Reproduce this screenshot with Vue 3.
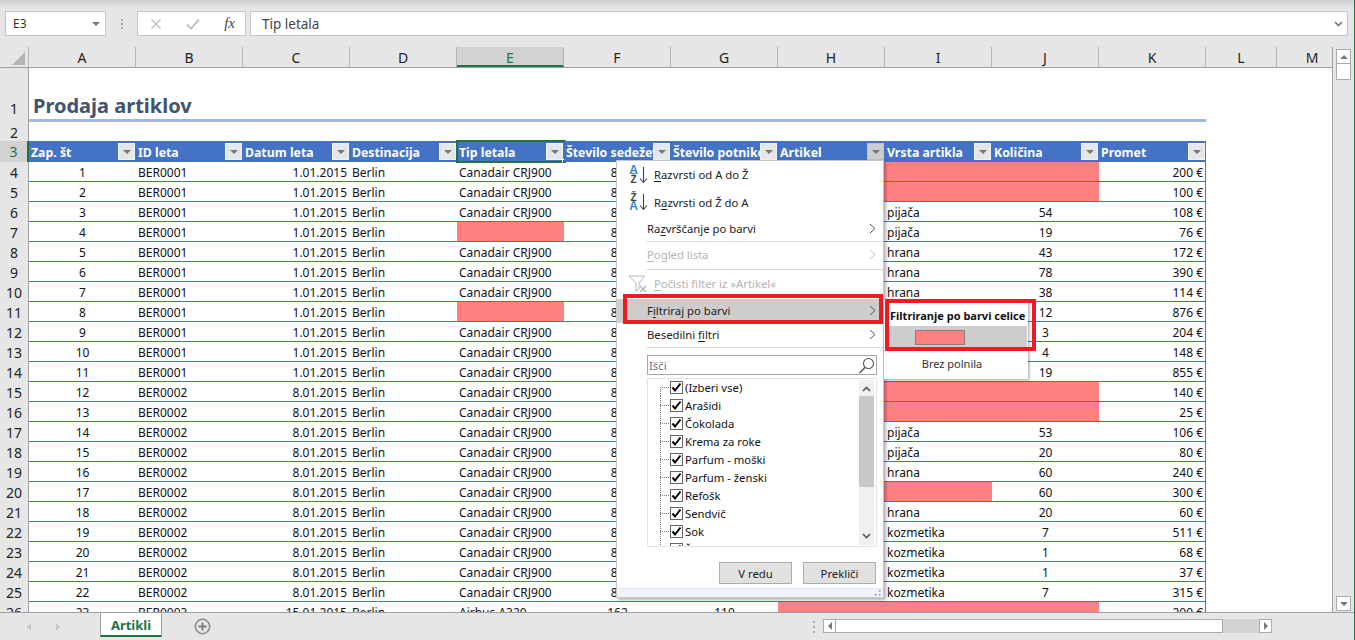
<script setup>
// column letters and widths of the visible sheet
const columns = ['A', 'B', 'C', 'D', 'E', 'F', 'G', 'H', 'I', 'J', 'K', 'L', 'M']
const headers = ['Zap. št', 'ID leta', 'Datum leta', 'Destinacija', 'Tip letala', 'Število sedežev', 'Število potnikov', 'Artikel', 'Vrsta artikla', 'Količina', 'Promet']

// n, tipe pink, vrsta (null = pink), kolicina (null = pink), promet
const raw = [
  [1, false, null, null, 200],
  [2, false, null, null, 100],
  [3, false, 'pijača', 54, 108],
  [4, true, 'pijača', 19, 76],
  [5, false, 'hrana', 43, 172],
  [6, false, 'hrana', 78, 390],
  [7, false, 'hrana', 38, 114],
  [8, true, '', 12, 876],
  [9, false, '', 3, 204],
  [10, false, '', 4, 148],
  [11, false, '', 19, 855],
  [12, false, null, null, 140],
  [13, false, null, null, 25],
  [14, false, 'pijača', 53, 106],
  [15, false, 'pijača', 20, 80],
  [16, false, 'hrana', 60, 240],
  [17, false, null, 60, 300],
  [18, false, 'hrana', 20, 60],
  [19, false, 'kozmetika', 7, 511],
  [20, false, 'kozmetika', 1, 68],
  [21, false, 'kozmetika', 1, 37],
  [22, false, 'kozmetika', 7, 315]
]

const rows = raw.map(([n, tipPink, vrsta, kolicina, promet]) => {
  const second = n > 11
  const pinkVrsta = vrsta === null
  return {
    num: n + 3,
    cells: [
      { text: n, cls: 'center' },
      { text: second ? 'BER0002' : 'BER0001' },
      { text: second ? '8.01.2015' : '1.01.2015', cls: 'right date' },
      { text: 'Berlin' },
      { text: tipPink ? '' : 'Canadair CRJ900', cls: tipPink ? 'pink' : '' },
      { text: 86, cls: 'center' },
      { text: '', cls: 'center' },
      { text: '', cls: pinkVrsta ? 'pink' : '' },
      { text: vrsta || '', cls: pinkVrsta ? 'pink' : '' },
      { text: kolicina ?? '', cls: kolicina ? 'center' : 'pink' },
      { text: promet + ' €', cls: 'right' }
    ]
  }
})

rows.push({
  num: 26,
  cells: [
    { text: 23, cls: 'center' },
    { text: 'BER0003' },
    { text: '15.01.2015', cls: 'right date' },
    { text: 'Berlin' },
    { text: 'Airbus A320' },
    { text: 162, cls: 'center' },
    { text: 110, cls: 'center' },
    { text: '', cls: 'pink' },
    { text: '', cls: 'pink' },
    { text: '', cls: 'pink' },
    { text: '200 €', cls: 'right' }
  ]
})

const filterItems = ['(Izberi vse)', 'Arašidi', 'Čokolada', 'Krema za roke', 'Parfum - moški', 'Parfum - ženski', 'Refošk', 'Sendvič', 'Sok', 'Šunka']
</script>

<template>
  <div class="app">
    <!-- Formula bar -->
    <div class="formula-bar">
      <div class="name-box">
        <span>E3</span>
        <i class="arrow-down"></i>
      </div>
      <div class="grip"><b></b><b></b><b></b></div>
      <div class="fx-box">
        <svg width="12" height="12" viewBox="0 0 12 12"><path d="M1.5 1.5l9 9M10.500 1.500l-9 9" stroke="#c4c4c4" stroke-width="1.6" fill="none" /></svg>
        <svg width="14" height="12" viewBox="0 0 14 12"><path d="M1 6.500l4 4 8-9" stroke="#c4c4c4" stroke-width="2" fill="none" /></svg>
        <span class="fx">fx</span>
      </div>
      <div class="formula-input">
        <span>Tip letala</span>
        <svg width="9" height="6" viewBox="0 0 9 6"><path d="M1 1l3.500 3.500L8 1" stroke="#777" stroke-width="1.6" fill="none" /></svg>
      </div>
    </div>

    <div class="main">
      <div class="grid">
        <!-- Column letters -->
        <div class="col-header">
          <div class="corner"><i></i></div>
          <div
            v-for="c in columns"
            :key="c"
            class="col-letter"
            :class="{ active: c === 'E', 'col-l': c === 'L' || c === 'M' }"
          >{{ c }}</div>
        </div>

        <div class="sheet">
          <div class="row row-title">
            <div class="row-num">1</div>
            <div class="title">Prodaja artiklov</div>
          </div>
          <div class="row row-blank">
            <div class="row-num">2</div>
          </div>
          <div class="row row-head">
            <div class="row-num active">3</div>
            <div v-for="(h, i) in headers" :key="h" class="head-cell">
              <span>{{ h }}</span>
              <div class="filter-btn" :class="{ open: h === 'Artikel' }"><i class="arrow-down"></i></div>
              <div v-if="i === 4" class="selection"><b></b></div>
            </div>
          </div>
          <div v-for="r in rows" :key="r.num" class="row">
            <div class="row-num">{{ r.num }}</div>
            <div v-for="(c, i) in r.cells" :key="i" class="cell" :class="c.cls">{{ c.text }}</div>
          </div>
        </div>
      </div>

      <!-- Vertical scrollbar -->
      <div class="vscroll">
        <div class="vs-btn"><i class="arrow-up"></i></div>
        <div class="vs-thumb"></div>
        <div class="vs-track"></div>
        <div class="vs-btn"><i class="arrow-down"></i></div>
      </div>
    </div>

    <!-- Sheet tabs -->
    <div class="tabs">
      <div class="tab-nav">
        <i class="nav-left"></i>
        <i class="nav-right"></i>
      </div>
      <div class="tab">Artikli</div>
      <svg class="add" width="17" height="17" viewBox="0 0 17 17">
        <circle cx="8.500" cy="8.500" r="7.200" fill="none" stroke="#8a8a8a" stroke-width="1.500" />
        <path d="M8.500 4.500v8M4.500 8.500h8" stroke="#7a7a7a" stroke-width="1.800" />
      </svg>
      <div class="grip tab-grip"><b></b><b></b><b></b></div>
      <div class="hscroll">
        <div class="hs-btn"><i class="nav-left dark"></i></div>
        <div class="hs-thumb"></div>
        <div class="hs-track"></div>
        <div class="hs-btn"><i class="nav-right dark"></i></div>
      </div>
    </div>

    <!-- Filter dropdown -->
    <div class="menu">
      <div class="item sort sort-a">
        <span class="az"><b class="blue">A</b><b>Ž</b></span>
        <svg class="sort-arrow" width="9" height="18" viewBox="0 0 9 18"><path d="M4.500 1v15M1 12.500l3.500 4 3.500-4" stroke="#444" stroke-width="1.100" fill="none" /></svg>
        <span><u>R</u>azvrsti od A do Ž</span>
      </div>
      <div class="item sort sort-z">
        <span class="az"><b>Ž</b><b class="blue">A</b></span>
        <svg class="sort-arrow" width="9" height="18" viewBox="0 0 9 18"><path d="M4.500 1v15M1 12.500l3.500 4 3.500-4" stroke="#444" stroke-width="1.100" fill="none" /></svg>
        <span>R<u>a</u>zvrsti od Ž do A</span>
      </div>
      <div class="item sub h24">
        <span>Ra<u>z</u>vrščanje po barvi</span>
        <svg class="chev" width="7" height="11" viewBox="0 0 7 11"><path d="M1 1l5 4.500-5 4.500" stroke="#555" fill="none" /></svg>
      </div>
      <div class="sep"></div>
      <div class="item sub disabled h27">
        <span><u>P</u>ogled lista</span>
        <svg class="chev" width="7" height="11" viewBox="0 0 7 11"><path d="M1 1l5 4.500-5 4.500" stroke="#bbb" fill="none" /></svg>
      </div>
      <div class="sep"></div>
      <div class="item sort disabled h29">
        <svg class="clear" width="20" height="18" viewBox="0 0 20 18">
          <path d="M1 1h16l-6 7v6l-3 2V8z" fill="#fff" stroke="#b9b9b9" />
          <path d="M12 11l6 6M18 11l-6 6" stroke="#b0b0b0" stroke-width="1.200" />
        </svg>
        <span><u>P</u>očisti filter iz »Artikel«</span>
      </div>
      <div class="item sub hover h24">
        <span>F<u>i</u>ltriraj po barvi</span>
        <svg class="chev" width="7" height="11" viewBox="0 0 7 11"><path d="M1 1l5 4.500-5 4.500" stroke="#555" fill="none" /></svg>
      </div>
      <div class="item sub h24">
        <span>Besedilni <u>f</u>iltri</span>
        <svg class="chev" width="7" height="11" viewBox="0 0 7 11"><path d="M1 1l5 4.500-5 4.500" stroke="#555" fill="none" /></svg>
      </div>
      <div class="sep"></div>

      <div class="search">
        <span>Išči</span>
        <svg width="17" height="17" viewBox="0 0 17 17">
          <circle cx="10.500" cy="6.500" r="5" fill="none" stroke="#555" stroke-width="1.100" />
          <path d="M7 10.500L1.500 16" stroke="#555" stroke-width="1.400" />
        </svg>
      </div>

      <div class="list">
        <div class="list-items">
          <div v-for="item in filterItems" :key="item" class="list-item">
            <span class="tree"></span>
            <span class="check">
              <svg width="11" height="11" viewBox="0 0 11 11"><path d="M1.500 5.500l2.500 3 5.500-7" stroke="#000" stroke-width="2" fill="none" /></svg>
            </span>
            <span>{{ item }}</span>
          </div>
        </div>
        <div class="list-scroll">
          <svg width="9" height="6" viewBox="0 0 9 6"><path d="M1 5l3.500-3.500L8 5" stroke="#555" stroke-width="1.600" fill="none" /></svg>
          <div class="list-thumb"></div>
          <svg width="9" height="6" viewBox="0 0 9 6"><path d="M1 1l3.500 3.500L8 1" stroke="#555" stroke-width="1.600" fill="none" /></svg>
        </div>
      </div>

      <div class="buttons">
        <button class="btn">V redu</button>
        <button class="btn">Prekliči</button>
      </div>

      <div class="gripper">
        <svg width="8" height="8" viewBox="0 0 8 8"><path d="M6 1h1.500v1.500H6zM6 5h1.500v1.500H6zM2 5h1.500v1.500H2z" fill="#888" /></svg>
      </div>
    </div>

    <!-- Colour submenu -->
    <div class="submenu">
      <div class="sub-title">Filtriranje po barvi celice</div>
      <div class="sub-swatch"><i></i></div>
      <div class="sub-none">Brez polnila</div>
    </div>

    <!-- Red callouts from the tutorial -->
    <div class="callout callout-item"></div>
    <div class="callout callout-sub"></div>
  </div>
</template>

<style scoped>
.app {
  position: relative;
  width: 1355px;
  height: 640px;
  overflow: hidden;
  display: flex;
  flex-direction: column;
  background: #e6e6e6;
  border-right: 1px solid #217346;
  box-sizing: border-box;
  font-family: "Noto Sans", sans-serif;
  font-size: 12px;
  color: #111;
}

.formula-bar {
  flex: none;
  height: 47px;
  box-sizing: border-box;
  padding: 11px 6px 11px 5px;
  display: flex;
  background: linear-gradient(to bottom, #cfcfcf 0, #e6e6e6 9px);
}

.name-box,
.fx-box,
.formula-input {
  box-sizing: border-box;
  height: 25px;
  background: #fff;
  border: 1px solid #c6c6c6;
  display: flex;
  align-items: center;
}

.name-box {
  width: 101px;
  padding: 0 5px 0 7px;
  justify-content: space-between;
  color: #333;
}

.grip {
  width: 31px;
  display: flex;
  flex-direction: column;
  align-items: center;
  justify-content: center;
  gap: 2px;
}

.grip b {
  width: 2px;
  height: 2px;
  background: #a8a8a8;
}

.fx-box {
  width: 109px;
  padding: 0 10px 0 12px;
  justify-content: space-between;
}

.fx {
  font-family: "Liberation Serif", serif;
  font-style: italic;
  font-size: 15px;
  color: #444;
}

.formula-input {
  flex: 1;
  margin-left: 4px;
  padding: 0 4px 0 11px;
  justify-content: space-between;
  font-size: 13.500px;
  color: #444;
}

.arrow-down {
  display: block;
  width: 0;
  height: 0;
  border-left: 4px solid transparent;
  border-right: 4px solid transparent;
  border-top: 4px solid #777;
}

.arrow-up {
  display: block;
  width: 0;
  height: 0;
  border-left: 4px solid transparent;
  border-right: 4px solid transparent;
  border-bottom: 4px solid #777;
}

.main {
  flex: none;
  height: 565px;
  display: flex;
}

.grid {
  width: 1333px;
  flex: none;
  display: flex;
  flex-direction: column;
  border-right: 1px solid #a0a0a0;
  box-sizing: border-box;
}

.col-header {
  flex: none;
  height: 21px;
  display: flex;
  overflow: hidden;
  box-sizing: border-box;
  border-bottom: 1px solid #a0a0a0;
}

.corner {
  flex: none;
  width: 29px;
  box-sizing: border-box;
  border-right: 1px solid #b4b4b4;
  padding: 5px 0 0 12px;
}

.corner i {
  display: block;
  width: 13px;
  height: 13px;
  background: #b4b4b4;
  clip-path: polygon(100% 0, 100% 100%, 0 100%);
}

.col-letter {
  flex: none;
  width: 107px;
  box-sizing: border-box;
  border-right: 1px solid #b4b4b4;
  text-align: center;
  font-size: 14px;
  line-height: 21px;
  color: #222;
}

.col-letter.active {
  background: #d2d2d2;
  color: #217346;
  border-bottom: 2px solid #217346;
}

.col-l {
  width: 71px;
}

.sheet {
  flex: 1;
  overflow: hidden;
  background: #fff;
}

.row {
  display: flex;
  height: 20px;
}

.row-num {
  flex: none;
  width: 29px;
  box-sizing: border-box;
  background: #e6e6e6;
  border-right: 1px solid #a0a0a0;
  text-align: center;
  font-size: 14px;
  line-height: 21px;
  color: #222;
}

.row-num.active {
  background: #d2d2d2;
  color: #217346;
  border-right: 2px solid #217346;
}

.row-title {
  height: 54px;
}

.row-title .row-num {
  padding-top: 30px;
}

.title {
  width: 1177px;
  box-sizing: border-box;
  padding: 24px 0 0 4px;
  border-bottom: 3px solid #a4b7e1;
  font-size: 20px;
  line-height: 27px;
  font-weight: 700;
  color: #44546a;
}

.row-blank {
  height: 19px;
}

.row-head {
  height: 21px;
}

.head-cell {
  position: relative;
  flex: none;
  width: 107px;
  box-sizing: border-box;
  padding-left: 2px;
  background: #4472c4;
  color: #fff;
  font-weight: 700;
  font-size: 12.300px;
  line-height: 23px;
  white-space: nowrap;
}

.head-cell span {
  display: block;
  overflow: hidden;
  height: 21px;
}

.filter-btn {
  position: absolute;
  right: 1px;
  top: 2px;
  width: 17px;
  height: 17px;
  box-sizing: border-box;
  background: #e6e6e6;
  border: 1px solid #f3f3f3;
  display: flex;
  align-items: center;
  justify-content: center;
}

.filter-btn.open {
  background: #d0cecc;
  border-color: #c0c0c0;
}

.selection {
  position: absolute;
  left: -1px;
  right: -2px;
  top: -1px;
  bottom: -1px;
  border: 2px solid #217346;
  pointer-events: none;
}

.selection b {
  position: absolute;
  right: -3px;
  bottom: -3px;
  width: 5px;
  height: 5px;
  background: #217346;
  border: 1px solid #fff;
  box-sizing: border-box;
}

.cell {
  flex: none;
  width: 107px;
  box-sizing: border-box;
  padding: 1px 2px 0;
  border-bottom: 1px solid #4472c4;
  line-height: 20px;
  white-space: nowrap;
  overflow: hidden;
}

.cell:nth-child(12) {
  border-right: 1px solid #4472c4;
}

.center {
  text-align: center;
}

.right {
  text-align: right;
}

.date {
  padding-right: 3px;
}

.pink {
  background: #ff8080;
}

/* Vertical scrollbar */
.vscroll {
  flex: none;
  width: 21px;
  padding: 2px 3px 1px 3px;
  box-sizing: border-box;
  display: flex;
  flex-direction: column;
}

.vs-btn {
  flex: none;
  height: 15px;
  box-sizing: border-box;
  background: #fff;
  border: 1px solid #ababab;
  display: flex;
  align-items: center;
  justify-content: center;
}

.vs-thumb {
  flex: none;
  height: 16px;
  box-sizing: border-box;
  background: #fff;
  border: 1px solid #ababab;
  border-top: none;
}

.vs-track {
  flex: 1;
}

/* Tabs */
.tabs {
  flex: 1;
  display: flex;
  box-sizing: border-box;
  border-top: 1px solid #a0a0a0;
}

.tab-nav {
  flex: none;
  width: 100px;
  display: flex;
  align-items: center;
  padding-left: 27px;
  gap: 25px;
  box-sizing: border-box;
}

.nav-left {
  display: block;
  width: 0;
  height: 0;
  border-top: 4px solid transparent;
  border-bottom: 4px solid transparent;
  border-right: 4px solid #c4c4c4;
}

.nav-right {
  display: block;
  width: 0;
  height: 0;
  border-top: 4px solid transparent;
  border-bottom: 4px solid transparent;
  border-left: 4px solid #c4c4c4;
}

.nav-left.dark {
  border-right-color: #777;
}

.nav-right.dark {
  border-left-color: #777;
}

.tab {
  flex: none;
  width: 62px;
  height: 24px;
  box-sizing: border-box;
  background: #fff;
  border-left: 1px solid #a0a0a0;
  border-right: 1px solid #a0a0a0;
  border-bottom: 2px solid #217346;
  text-align: center;
  font-weight: 700;
  font-size: 13px;
  line-height: 24px;
  color: #217346;
}

.add {
  flex: none;
  margin: 5px 0 0 32px;
}

.tab-grip {
  margin-left: auto;
  height: 27px;
  width: 14px;
  gap: 3px;
}

.hscroll {
  flex: none;
  width: 449px;
  height: 14px;
  margin: 6px 82px 0 2px;
  display: flex;
}

.hs-btn {
  flex: none;
  width: 13px;
  box-sizing: border-box;
  background: #fff;
  border: 1px solid #ababab;
  display: flex;
  align-items: center;
  justify-content: center;
}

.hs-thumb {
  flex: none;
  width: 387px;
  box-sizing: border-box;
  background: #fff;
  border: 1px solid #ababab;
  border-left: none;
}

.hs-track {
  flex: 1;
  background: #d4d4d4;
}

/* Filter menu */
.menu {
  position: absolute;
  left: 616px;
  top: 160px;
  width: 268px;
  height: 438px;
  box-sizing: border-box;
  background: #fff;
  border: 1px solid #c8c8c8;
  box-shadow: 2px 2px 3px rgba(0, 0, 0, 0.3);
  padding-top: 1px;
  display: flex;
  flex-direction: column;
  font-size: 11.300px;
}

.item {
  flex: none;
  box-sizing: border-box;
  display: flex;
  align-items: center;
  padding-left: 30px;
  padding-bottom: 2px;
  color: #222;
}

.item u {
  text-underline-offset: 2px;
}

.sort {
  padding-left: 11px;
}

.sort-a {
  height: 27px;
}

.sort-z {
  height: 28px;
}

.az {
  flex: none;
  width: 11px;
  display: flex;
  flex-direction: column;
  align-items: center;
  font-size: 10px;
  line-height: 9px;
  font-family: "Liberation Sans", sans-serif;
  color: #444;
}

.blue {
  color: #2e86c9;
  font-size: 12px;
}

.sort-arrow {
  flex: none;
  margin: 0 6px 0 0;
}

.sub {
  justify-content: space-between;
  padding-right: 7px;
}

.h24 {
  height: 24px;
}

.h27 {
  height: 27px;
}

.h29 {
  height: 29px;
}

.disabled {
  color: #b4b4b4;
}

.clear {
  flex: none;
  margin-right: 6px;
}

.hover {
  background: #cfcdcb;
}

.sep {
  flex: none;
  height: 1px;
  margin-left: 29px;
  background: #dcdcdc;
}

.search {
  flex: none;
  height: 20px;
  margin: 7px 6px 0 30px;
  box-sizing: border-box;
  border: 1px solid #a6a6a6;
  padding: 0 1px 0 1px;
  display: flex;
  align-items: center;
  justify-content: space-between;
  color: #77707c;
}

.list {
  position: relative;
  flex: none;
  height: 169px;
  margin: 3px 6px 0 30px;
  box-sizing: border-box;
  border: 1px solid #e2e2e2;
  overflow: hidden;
}

.list-items {
  margin-top: -1px;
  padding-left: 12px;
}

.list-item {
  display: flex;
  align-items: center;
  height: 18px;
  white-space: nowrap;
}

.tree {
  flex: none;
  align-self: stretch;
  width: 10px;
  background:
    repeating-linear-gradient(to bottom, #777 0 1px, transparent 1px 2px) left top / 1px 100% no-repeat,
    repeating-linear-gradient(to right, #777 0 1px, transparent 1px 2px) left center / 10px 1px no-repeat;
}

.list-item:first-child .tree {
  background:
    repeating-linear-gradient(to bottom, #777 0 1px, transparent 1px 2px) left bottom / 1px 50% no-repeat,
    repeating-linear-gradient(to right, #777 0 1px, transparent 1px 2px) left center / 10px 1px no-repeat;
}

.check {
  flex: none;
  width: 13px;
  height: 13px;
  box-sizing: border-box;
  margin-right: 2px;
  border: 1px solid #666;
  background: #fff;
  display: flex;
}

.list-scroll {
  position: absolute;
  right: 2px;
  top: 1px;
  bottom: 1px;
  width: 15px;
  background: #f0f0f0;
  display: flex;
  flex-direction: column;
  align-items: center;
  justify-content: space-between;
  padding: 6px 0;
  box-sizing: border-box;
}

.list-thumb {
  position: absolute;
  left: 0;
  top: 16px;
  width: 15px;
  height: 91px;
  background: #c8c8c8;
}

.buttons {
  flex: none;
  display: flex;
  justify-content: flex-end;
  gap: 11px;
  margin: 15px 7px 0 0;
}

.btn {
  width: 73px;
  height: 22px;
  padding: 0;
  box-sizing: border-box;
  background: #e1e1e1;
  border: 1px solid #adadad;
  font-family: inherit;
  font-size: 11.300px;
  color: #222;
}

.gripper {
  flex: 1;
  margin-top: 4px;
  background: #f0f4f8;
  border-top: 1px solid #dfe6ea;
  display: flex;
  justify-content: flex-end;
  align-items: center;
  padding-right: 2px;
}

/* Colour submenu */
.submenu {
  position: absolute;
  left: 884px;
  top: 300px;
  width: 144px;
  height: 79px;
  box-sizing: border-box;
  background: #fff;
  box-shadow: 1px 1px 3px rgba(0, 0, 0, 0.4);
  padding: 5px 1px 0 5px;
  font-size: 11px;
}

.sub-title {
  height: 21px;
  padding-left: 1px;
  font-weight: 700;
  line-height: 21px;
  white-space: nowrap;
  color: #111;
}

.sub-swatch {
  height: 23px;
  background: #cfcdcb;
  padding: 4px 0 0 26px;
  box-sizing: border-box;
}

.sub-swatch i {
  display: block;
  width: 50px;
  height: 15px;
  box-sizing: border-box;
  background: #ff8080;
  border: 1px solid #808080;
}

.sub-none {
  margin-top: 5px;
  padding-right: 12px;
  text-align: center;
  line-height: 20px;
  color: #333;
}

.callout {
  position: absolute;
  box-sizing: border-box;
  border: 4px solid #ed1c24;
  pointer-events: none;
}

.callout-item {
  left: 623px;
  top: 294px;
  width: 260px;
  height: 30px;
}

.callout-sub {
  left: 885px;
  top: 299px;
  width: 151px;
  height: 52px;
}
</style>
